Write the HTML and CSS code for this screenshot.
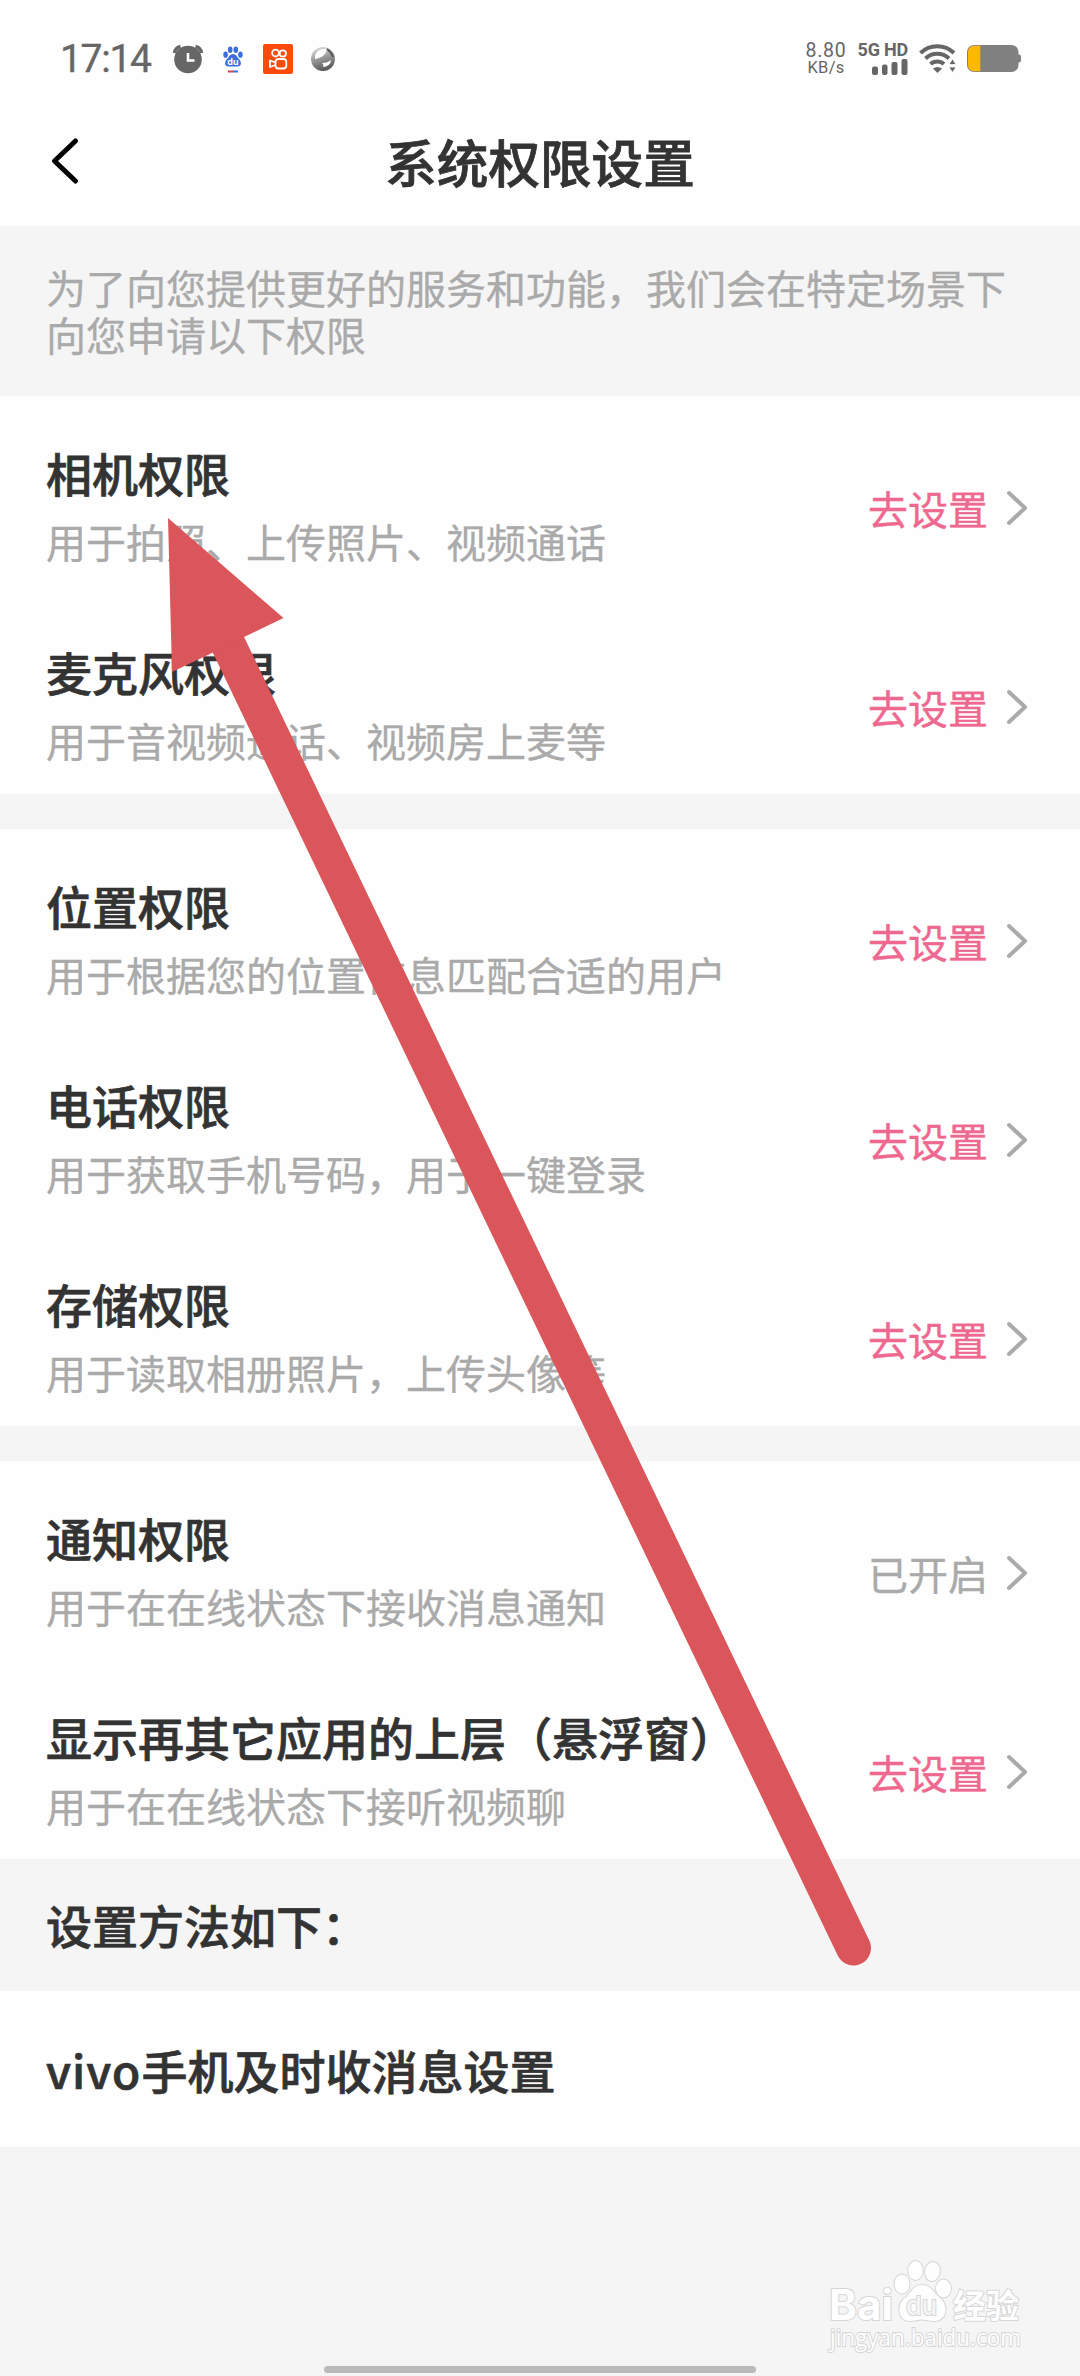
FILE: index.html
```html
<!DOCTYPE html>
<html lang="zh-CN">

<head>
    <meta charset="UTF-8">
    <meta name="viewport" content="width=device-width, initial-scale=1.0">
    <title>系统权限设置</title>
    <link rel="stylesheet" href="styles.css">
</head>

<body>
    <div class="statusbar">
        <div class="status-left">
            <span class="time">17:14</span>
            <svg class="alarm" width="32" height="30" viewBox="0 0 32 30">
                <path d="M2.500 9a8 8 0 0 1 6-6.500M23.500 2.500a8 8 0 0 1 6 6.500" fill="none" stroke="#666" stroke-width="3.500" />
                <circle cx="16" cy="15.500" r="13.800" fill="#666" />
                <path d="M16 9v7.500h6.500" fill="none" stroke="#fff" stroke-width="2.600" />
            </svg>
            <svg class="baidu" width="20" height="28" viewBox="0 0 20 28">
                <g fill="#3b6fd9">
                    <ellipse cx="2.600" cy="8.700" rx="2.300" ry="3.100" />
                    <ellipse cx="7.200" cy="3.700" rx="2.300" ry="3.200" />
                    <ellipse cx="12.800" cy="3.700" rx="2.300" ry="3.200" />
                    <ellipse cx="17.400" cy="8.700" rx="2.300" ry="3.100" />
                    <path d="M10 8c3 0 4 3 6 5 3 3 2.500 7.500-1.500 7.500h-9C1.500 20.500 1 16 4 13c2-2 3-5 6-5z" />
                </g>
                <text x="10" y="18.500" class="baidu-du">du</text>
                <path d="M5 25.500h5" stroke="#d8404a" stroke-width="2" />
                <path d="M10 25.500h5" stroke="#3b6fd9" stroke-width="2" />
            </svg>
            <svg class="kuaishou" width="30" height="30" viewBox="0 0 30 30">
                <rect width="30" height="30" rx="2" fill="#fb4b0c" />
                <g fill="none" stroke="#fff" stroke-width="1.800">
                    <circle cx="12.500" cy="9" r="3.400" />
                    <circle cx="19.800" cy="9.500" r="3.200" />
                    <rect x="12.500" y="15" width="10.800" height="9.500" rx="3" />
                    <path d="M12.500 18.500L7 16.500v6.500l5.500-2" stroke-linejoin="round" />
                </g>
            </svg>
            <svg class="ball" width="24" height="24" viewBox="0 0 24 24">
                <defs>
                    <linearGradient id="ballFill" x1="0.200" y1="0" x2="0.500" y2="1">
                        <stop offset="0" stop-color="#ddd" />
                        <stop offset="0.500" stop-color="#999" />
                        <stop offset="1" stop-color="#555" />
                    </linearGradient>
                </defs>
                <circle cx="12" cy="12" r="12" fill="url(#ballFill)" />
                <path d="M4 9c1-5 6-8 12-7-1 6-6 9-12 10z" fill="#fff" />
                <path d="M16 2c3 2 5 5 6 8" fill="none" stroke="#555" stroke-width="2" />
                <path d="M11 16c4 0 7-1 9-3 0 4-4 7-8 7 1-2 0-3-1-4z" fill="#fff" />
            </svg>
        </div>
        <div class="status-right">
            <div class="speed">
                <span class="speed-num">8.80</span>
                <span class="speed-unit">KB/s</span>
            </div>
            <div class="signal">
                <span class="network">5G HD</span>
                <svg width="36" height="16" viewBox="0 0 36 16">
                    <g fill="#666">
                        <rect x="0" y="7.500" width="6" height="8.500" rx="2" />
                        <rect x="10" y="5.500" width="5.500" height="10.500" rx="2" />
                        <rect x="19.500" y="3" width="6" height="13" rx="2" />
                        <rect x="29.500" y="0" width="6" height="16" rx="2" />
                    </g>
                </svg>
            </div>
            <svg class="wifi" width="38" height="30" viewBox="0 0 38 30">
                <g fill="none" stroke="#666" stroke-width="4">
                    <path d="M1.500 9a24 24 0 0 1 33.500 0" />
                    <path d="M6.500 14.500a17 17 0 0 1 23.500 0" />
                    <path d="M11.500 20a10 10 0 0 1 13.500 0" />
                </g>
                <path d="M18.500 29l-4.500-4.500q4.500-3 9 0z" fill="#666" />
                <path d="M33.500 15l3.600 5.500h-7.200zM33.500 28.500l3.600-5.500h-7.200z" fill="#666" stroke="#fefefe" stroke-width=".8" />
            </svg>
            <svg class="battery" width="54" height="28" viewBox="0 0 54 28">
                <path d="M50 9.500h2a2 2 0 0 1 2 2v4a2 2 0 0 1-2 2h-2z" fill="#808080" />
                <rect x="0" y="0" width="51.500" height="27" rx="7" fill="#808080" />
                <path d="M13.300 .8V26.200H7a6 6 0 0 1-6-6V6.800a6 6 0 0 1 6-6z" fill="#ffb800" />
            </svg>
        </div>
    </div>

    <div class="navbar">
        <svg class="back" width="30" height="48" viewBox="0 0 30 48">
            <path d="M25.500 4L4.500 24l21 20" fill="none" stroke="#000" stroke-width="5" stroke-linecap="round" stroke-linejoin="round" />
        </svg>
        <h1>系统权限设置</h1>
    </div>

    <p class="notice">为了向您提供更好的服务和功能，我们会在特定场景下<br>向您申请以下权限</p>

    <div class="group">
        <div class="item">
            <div class="item-text">
                <div class="item-title">相机权限</div>
                <div class="item-desc">用于拍照、上传照片、视频通话</div>
            </div>
            <span class="action">去设置</span>
            <svg class="chevron" width="22" height="36" viewBox="0 0 22 36"><path d="M3 3l16 15L3 33" /></svg>
        </div>
        <div class="item">
            <div class="item-text">
                <div class="item-title">麦克风权限</div>
                <div class="item-desc">用于音视频通话、视频房上麦等</div>
            </div>
            <span class="action">去设置</span>
            <svg class="chevron" width="22" height="36" viewBox="0 0 22 36"><path d="M3 3l16 15L3 33" /></svg>
        </div>
    </div>

    <div class="group">
        <div class="item">
            <div class="item-text">
                <div class="item-title">位置权限</div>
                <div class="item-desc">用于根据您的位置信息匹配合适的用户</div>
            </div>
            <span class="action">去设置</span>
            <svg class="chevron" width="22" height="36" viewBox="0 0 22 36"><path d="M3 3l16 15L3 33" /></svg>
        </div>
        <div class="item">
            <div class="item-text">
                <div class="item-title">电话权限</div>
                <div class="item-desc">用于获取手机号码，用于一键登录</div>
            </div>
            <span class="action">去设置</span>
            <svg class="chevron" width="22" height="36" viewBox="0 0 22 36"><path d="M3 3l16 15L3 33" /></svg>
        </div>
        <div class="item">
            <div class="item-text">
                <div class="item-title">存储权限</div>
                <div class="item-desc">用于读取相册照片，上传头像等</div>
            </div>
            <span class="action">去设置</span>
            <svg class="chevron" width="22" height="36" viewBox="0 0 22 36"><path d="M3 3l16 15L3 33" /></svg>
        </div>
    </div>

    <div class="group">
        <div class="item">
            <div class="item-text">
                <div class="item-title">通知权限</div>
                <div class="item-desc">用于在在线状态下接收消息通知</div>
            </div>
            <span class="action opened">已开启</span>
            <svg class="chevron" width="22" height="36" viewBox="0 0 22 36"><path d="M3 3l16 15L3 33" /></svg>
        </div>
        <div class="item">
            <div class="item-text">
                <div class="item-title">显示再其它应用的上层（悬浮窗）</div>
                <div class="item-desc">用于在在线状态下接听视频聊</div>
            </div>
            <span class="action">去设置</span>
            <svg class="chevron" width="22" height="36" viewBox="0 0 22 36"><path d="M3 3l16 15L3 33" /></svg>
        </div>
    </div>

    <h2 class="method">设置方法如下：</h2>
    <div class="guide"><span class="brand">vivo</span>手机及时收消息设置</div>

    <div class="footer">
        <svg class="watermark" width="200" height="100" viewBox="0 0 200 100">
            <g class="wm">
                <text x="3" y="63" class="wm-bai" textLength="64" lengthAdjust="spacingAndGlyphs">Bai</text>
                <ellipse cx="76" cy="27" rx="7.500" ry="9.500" />
                <ellipse cx="89.500" cy="13.500" rx="7.300" ry="9.500" />
                <ellipse cx="106.500" cy="14.500" rx="7.300" ry="9.500" transform="rotate(10 106.500 14.500)" />
                <ellipse cx="117.500" cy="31.500" rx="7.500" ry="9" />
                <path d="M96 28c9 0 12 8 18 13 8 6 8 22-5 23-5 .5-8-1.500-13-1.500s-8 2-13 1.500c-12-1-12-17-4-23 6-5 8-13 17-13z" />
                <text x="80" y="58" class="wm-du" textLength="31" lengthAdjust="spacingAndGlyphs">du</text>
                <text x="127" y="61" class="wm-cn">经验</text>
                <text x="4" y="89" class="wm-url" textLength="191" lengthAdjust="spacingAndGlyphs">jingyan.baidu.com</text>
            </g>
        </svg>
        <div class="home-bar"></div>
    </div>

    <!-- red arrow pointing at the first item -->
    <svg class="arrow" width="1080" height="2376" viewBox="0 0 1080 2376">
        <path d="M229 646L853.500 1948" stroke="#da565b" stroke-width="35" stroke-linecap="round" />
        <path d="M168 518L283.500 618L244 637L212 653L172 672z" fill="#da565b" />
    </svg>
</body>

</html>
```
FILE: styles.css
```css
* {
    margin: 0;
    padding: 0;
    box-sizing: border-box;
}

body {
    position: relative;
    width: 1080px;
    height: 2376px;
    display: flex;
    flex-direction: column;
    overflow: hidden;
    background-color: #f5f5f5;
    font-family: "Noto Sans CJK SC", sans-serif;
    color: #333333;
}

svg {
    display: block;
    flex: none;
}

.statusbar {
    height: 100px;
    padding: 17px 59px 0 60px;
    display: flex;
    align-items: center;
    justify-content: space-between;
    background-color: #fefefe;
    color: #666666;
    font-family: Inter, sans-serif;
}

.status-left,
.status-right {
    display: flex;
    align-items: center;
}

.time {
    width: 112px;
    font-family: Roboto, sans-serif;
    font-size: 39px;
    line-height: 44px;
    letter-spacing: -1.3px;
    -webkit-text-stroke: 0.4px #666666;
}

.baidu {
    margin-left: 19px;
    margin-top: 2px;
}

.baidu-du {
    fill: #ffffff;
    font-size: 9px;
    font-weight: 700;
    text-anchor: middle;
}

.kuaishou {
    margin-left: 20px;
}

.ball {
    margin-left: 18px;
}

.speed {
    display: flex;
    flex-direction: column;
    align-items: center;
    width: 42px;
    margin-right: 11px;
    font-family: Roboto, sans-serif;
}

.speed-num {
    font-size: 19.5px;
    line-height: 17px;
    letter-spacing: 0.7px;
}

.speed-unit {
    font-size: 16.5px;
    line-height: 17px;
    letter-spacing: 0.3px;
}

.signal {
    display: flex;
    flex-direction: column;
    align-items: flex-end;
    gap: 2px;
    width: 50px;
    margin-right: 11px;
}

.network {
    font-family: Roboto, sans-serif;
    font-size: 18px;
    font-weight: 700;
    line-height: 15px;
    letter-spacing: -0.2px;
    white-space: nowrap;
}

.wifi {
    margin-right: 10px;
}

.navbar {
    height: 126px;
    padding: 0 50px 4px 50px;
    display: flex;
    align-items: center;
    background-color: #fefefe;
}

.navbar h1 {
    flex: 1;
    margin-right: 30px;
    font-size: 51.6px;
    font-weight: 500;
    line-height: 72px;
    text-align: center;
    -webkit-text-stroke: 0.8px #333333;
}

.notice {
    height: 170px;
    padding: 38px 46px 0 46px;
    font-size: 40px;
    line-height: 47px;
    color: #aaaaaa;
    white-space: nowrap;
    -webkit-text-stroke: 0.3px #aaaaaa;
}

.group {
    margin-bottom: 35px;
    background-color: #fefefe;
}

.item {
    height: 199px;
    padding: 24px 52px 0 46px;
    display: flex;
    align-items: center;
}

.item-text {
    flex: 1;
}

.item-title {
    font-size: 46px;
    font-weight: 500;
    line-height: 66px;
    -webkit-text-stroke: 0.7px #333333;
}

.item-desc {
    font-size: 40px;
    line-height: 72px;
    color: #aaaaaa;
    -webkit-text-stroke: 0.3px #aaaaaa;
}

.action {
    margin-right: 18px;
    font-size: 40px;
    line-height: 60px;
    color: #ee6890;
    -webkit-text-stroke: 0.4px #ee6890;
}

.opened {
    color: #aaaaaa;
    -webkit-text-stroke-color: #aaaaaa;
}

.chevron path {
    fill: none;
    stroke: #aaaaaa;
    stroke-width: 4;
    stroke-linecap: round;
    stroke-linejoin: round;
}

.method {
    height: 132px;
    margin-top: -35px;
    padding-left: 46px;
    font-size: 46px;
    font-weight: 500;
    line-height: 130px;
    -webkit-text-stroke: 0.7px #333333;
}

.guide {
    height: 156px;
    padding-left: 46px;
    background-color: #fefefe;
    font-size: 46px;
    font-weight: 500;
    line-height: 156px;
    -webkit-text-stroke: 0.7px #333333;
}

.brand {
    letter-spacing: 1px;
}

.footer {
    flex: 1;
    display: flex;
    flex-direction: column;
    justify-content: flex-end;
    align-items: center;
    padding-bottom: 3px;
}

.watermark {
    align-self: flex-end;
    margin-right: 54px;
    margin-bottom: 9px;
}

.wm {
    fill: #fefefe;
    stroke: #d6d6d6;
    stroke-width: 2;
    paint-order: stroke;
    font-family: Inter, sans-serif;
}

.wm-bai {
    font-size: 42px;
    font-weight: 700;
}

.wm-du {
    font-size: 26px;
    font-weight: 500;
    fill: #f5f5f5;
}

.wm-cn {
    font-family: "Noto Sans CJK SC", sans-serif;
    font-size: 33px;
    font-weight: 700;
}

.wm-url {
    font-family: "Open Sans", sans-serif;
    font-size: 23px;
}

.home-bar {
    width: 432px;
    height: 7px;
    border-radius: 4px;
    background-color: #bababa;
}

.arrow {
    position: absolute;
    top: 0;
    left: 0;
}
```
